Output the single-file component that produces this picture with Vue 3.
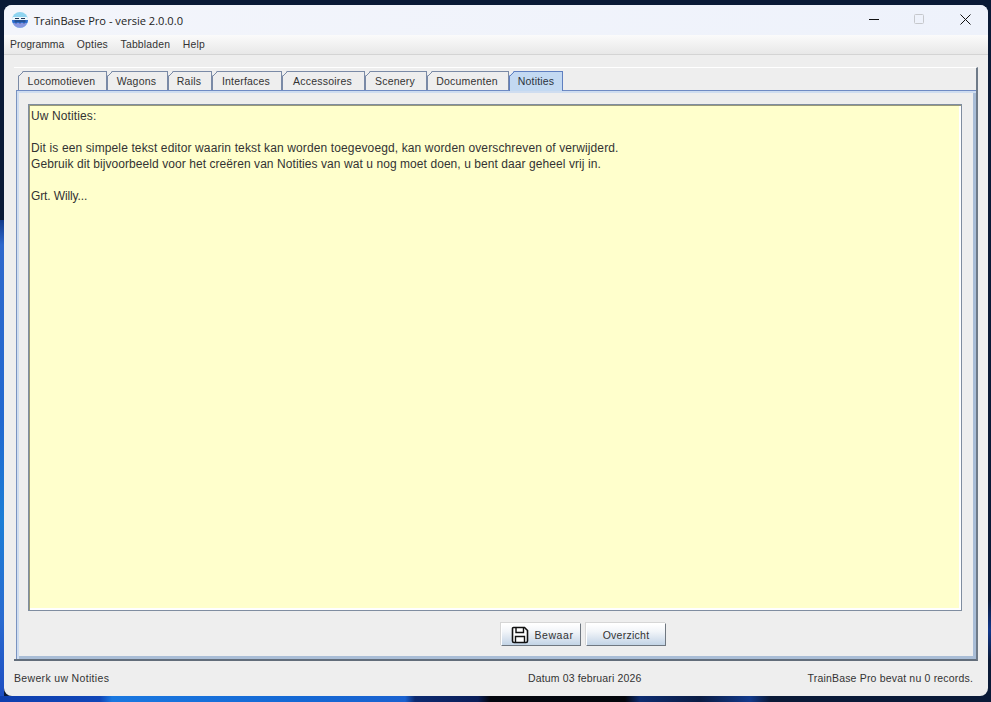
<script setup>
const tabs = [
  { label: 'Locomotieven', w: 89 },
  { label: 'Wagons', w: 61 },
  { label: 'Rails', w: 44 },
  { label: 'Interfaces', w: 70 },
  { label: 'Accessoires', w: 83 },
  { label: 'Scenery', w: 62 },
  { label: 'Documenten', w: 82 },
  { label: 'Notities', w: 54, active: true }
]
const menus = ['Programma', 'Opties', 'Tabbladen', 'Help']
</script>

<template>
  <div class="desktop">
    <div class="window">
      <header class="titlebar">
        <svg class="logo" width="16" height="16" viewBox="0 0 16 16">
          <circle cx="8" cy="8" r="8" fill="#8fd4f0" />
          <path d="M0.6 5h14.8a8 8 0 0 1 .6 3H0a8 8 0 0 1 .6-3z" fill="#eef7fc" />
          <path d="M0 8h16a8 8 0 0 1-.7 3H.7A8 8 0 0 1 0 8z" fill="#2f6fd0" />
          <path d="M.7 11h14.6a8 8 0 0 1-14.6 0z" fill="#8796e0" />
          <path d="M3 6.5h4M9 6.5h4M2.5 9h11" stroke="#1d3558" stroke-width="1" />
          <path d="M4 10.5v1M8 10.5v1M12 10.5v1" stroke="#1d3558" stroke-width="1" />
        </svg>
        <span class="title">TrainBase Pro - versie 2.0.0.0</span>
        <div class="controls">
          <svg width="11" height="11" viewBox="0 0 11 11" class="ctl-min"><path d="M0 5.5h10" stroke="#111" stroke-width="1" /></svg>
          <svg width="11" height="11" viewBox="0 0 11 11" class="ctl-max"><rect x=".5" y=".5" width="9" height="9" rx="1" fill="none" stroke="#c6c8cc" /></svg>
          <svg width="11" height="11" viewBox="0 0 11 11" class="ctl-close"><path d="M.5 .5l10 10M10.5 .5L.5 10.5" stroke="#111" stroke-width="1" /></svg>
        </div>
      </header>
      <nav class="menubar">
        <span v-for="m in menus" :key="m" class="menu">{{ m }}</span>
      </nav>
      <main class="body">
        <section class="outer">
          <div class="tabrow">
            <div
              v-for="t in tabs"
              :key="t.label"
              class="tab"
              :class="{ active: t.active }"
              :style="{ width: t.w + 'px' }"
            >{{ t.label }}</div>
          </div>
          <div class="panel">
            <div class="editor">
              <p>Uw Notities:</p>
              <p>&nbsp;</p>
              <p class="line-a">Dit is een simpele tekst editor waarin tekst kan worden toegevoegd, kan worden overschreven of verwijderd.</p>
              <p class="line-b">Gebruik dit bijvoorbeeld voor het creëren van Notities van wat u nog moet doen, u bent daar geheel vrij in.</p>
              <p>&nbsp;</p>
              <p class="line-c">Grt. Willy...</p>
            </div>
            <div class="buttons">
              <button class="btn save">
                <svg width="18" height="18" viewBox="0 0 18 18">
                  <path d="M2.5 1.5h11l3 3v10.5a1.5 1.5 0 0 1-1.5 1.5H3a1.5 1.5 0 0 1-1.5-1.5V2.5a1 1 0 0 1 1-1z" fill="#fff" stroke="#111" stroke-width="1.6" />
                  <path d="M5 2v4.5h7.5V2" fill="none" stroke="#111" stroke-width="1.4" />
                  <path d="M4.5 16v-5.5h9V16" fill="none" stroke="#111" stroke-width="1.4" />
                </svg>
                <span>Bewaar</span>
              </button>
              <button class="btn plain">Overzicht</button>
            </div>
          </div>
        </section>
        <footer class="status">
          <span class="st-left">Bewerk uw Notities</span>
          <span class="st-mid">Datum 03 februari 2026</span>
          <span class="st-right">TrainBase Pro bevat nu 0 records.</span>
        </footer>
      </main>
    </div>
  </div>
</template>

<style>
html, body { margin: 0; padding: 0; overflow: hidden; }
</style>

<style scoped>
.desktop {
  width: 991px;
  height: 702px;
  box-sizing: border-box;
  padding: 5px 3px 6px 4px;
  background:
    linear-gradient(90deg, #0f3fae 0, #1046b8 100px, #1a78e0 112px, #1468d4 300px, #1a62d0 405px, #0c2a70 415px, #0a1e58 478px, #03060f 490px, #04060c 625px, #0d2c70 640px, #0a1c44 700px, #123a8c 750px, #0a1a38 770px, #0a1a38 100%) 0 696px / 100% 6px no-repeat,
    linear-gradient(180deg, #123a8a 0, #2f68cc 25px, #2268d0 200px, #1c7ed6 300px, #2a6ad0 400px, #1c4cc0 480px, #0d3cc0 100%) 0 220px / 4px 482px no-repeat,
    linear-gradient(180deg, #0a1a38 0, #12388c 50%, #0a1a38 100%) 988px 600px / 3px 60px no-repeat,
    #0a1a36;
  font-family: "Liberation Sans", Arial, sans-serif;
}
.window {
  height: 100%;
  display: flex;
  flex-direction: column;
  background: #eeeeee;
  border-radius: 8px;
  overflow: hidden;
}
.titlebar {
  flex: 0 0 30px;
  display: flex;
  align-items: center;
  padding-left: 8px;
  background: linear-gradient(90deg, #f3f5fb 0%, #eef2fb 100%);
}
.logo { flex: none; }
.title {
  margin-left: 6px;
  font-family: "Open Sans", "Noto Sans", sans-serif;
  font-size: 11.1px;
  color: #222;
}
.controls {
  margin-left: auto;
  display: flex;
  align-items: center;
  padding-right: 17px;
  padding-bottom: 2px;
}
.ctl-max { margin-left: 34px; }
.ctl-close { margin-left: 35px; }
.menubar {
  flex: 0 0 20px;
  box-sizing: border-box;
  display: flex;
  align-items: center;
  padding-left: 6px;
  gap: 12.5px;
  background: linear-gradient(180deg, #fbfbfb 0%, #e8e8e8 100%);
  border-bottom: 1px solid #d4d4d4;
}
.menu { font-size: 10.4px; color: #333; }
.menu:not(:first-child) { letter-spacing: 0.2px; }
.body {
  flex: 1;
  display: flex;
  flex-direction: column;
  padding: 12px 10px 0 10px;
  min-height: 0;
}
.outer {
  height: 594px;
  flex: none;
  box-sizing: border-box;
  border-top: 1px solid #fff;
  border-right: 2px solid #6e7a88;
  border-bottom: 2px solid #626d7a;
  display: flex;
  flex-direction: column;
  padding: 3px 0 0 2px;
}
.tabrow {
  display: flex;
  height: 19px;
  padding-left: 2px;
  position: relative;
  z-index: 1;
}
.tab {
  position: relative;
  box-sizing: border-box;
  height: 19px;
  padding-right: 2px;
  text-align: center;
  line-height: 18px;
  font-size: 10.5px;
  letter-spacing: 0.2px;
  color: #333;
  background: #eeeeee;
  border: 1px solid #7a8aa6;
  border-bottom: 0;
  clip-path: polygon(5px 0, 100% 0, 100% 100%, 0 100%, 0 5px);
}
.tab::before {
  content: "";
  position: absolute;
  left: -1px;
  top: -1px;
  width: 6px;
  height: 6px;
  background: linear-gradient(135deg, transparent 42%, #7a8aa6 42%, #7a8aa6 58%, transparent 58%);
}
.tab.active {
  height: 20px;
  padding-right: 0;
  background: #c3d9f2;
  border: 1px solid #5f7fc0;
  border-bottom: 0;
  color: #2b3340;
}
.tab.active::before {
  background: linear-gradient(135deg, transparent 42%, #5f7fc0 42%, #5f7fc0 58%, transparent 58%);
}
.panel {
  flex: 1;
  display: flex;
  flex-direction: column;
  box-sizing: border-box;
  border-left: 1px solid #7a93c0;
  border-top: 1px solid #6f8bc4;
  box-shadow: inset 2px 2px 0 #cfddf0, inset -3px -3px 0 #a9bdd6;
  padding: 13px 14px 0 11px;
  min-height: 0;
}
.editor {
  box-sizing: border-box;
  height: 507px;
  flex: none;
  background: #ffffcc;
  border: 1px solid #7f8da0;
  box-shadow: inset 1px 1px 0 #9a9a78, inset -2px -2px 0 #fff;
  padding: 3px 2px;
  font-size: 12px;
  line-height: 16px;
  letter-spacing: 0.115px;
  color: #333;
}
.editor p { margin: 0; }
.editor .line-a { letter-spacing: 0.125px; }
.editor .line-b { letter-spacing: 0.07px; }
.editor .line-c { letter-spacing: -0.115px; }
.buttons {
  display: flex;
  gap: 5px;
  margin-top: 12px;
  padding-left: 473px;
}
.btn {
  box-sizing: border-box;
  height: 23px;
  width: 80px;
  padding: 0;
  display: flex;
  align-items: center;
  justify-content: center;
  gap: 5px;
  font-family: "Liberation Sans", Arial, sans-serif;
  font-size: 10.5px;
  letter-spacing: 0.25px;
  color: #333;
  background: linear-gradient(180deg, #ffffff 0%, #f2f5f9 35%, #c3d4e6 100%);
  border: 1px solid;
  border-color: #fff #6f7780 #6f7780 #fff;
  box-shadow: -1px -1px 0 #d6d6d6;
}
.save { padding-left: 3px; }
.save svg { flex: none; }
.save span { letter-spacing: 0.6px; }
.status {
  flex: 1;
  display: grid;
  grid-template-columns: 514px auto 1fr;
  align-items: center;
  font-size: 10.5px;
  color: #333;
  padding: 0 5px 2px 0;
}
.st-left { letter-spacing: 0.33px; }
.st-mid { letter-spacing: 0.14px; }
.st-right { justify-self: end; letter-spacing: 0.18px; }
</style>
